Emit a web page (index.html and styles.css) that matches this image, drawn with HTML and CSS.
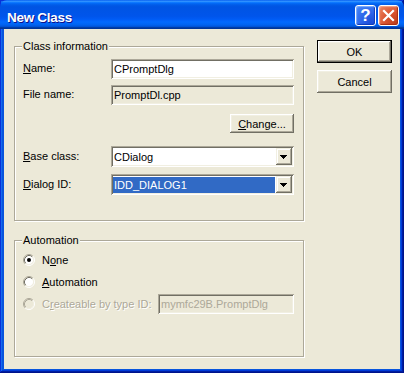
FILE: index.html
```html
<!DOCTYPE html>
<html>
<head>
<meta charset="utf-8">
<title>New Class</title>
<link rel="stylesheet" href="styles.css">
</head>
<body>
<div class="window">
  <div class="titlebar">
    <span class="title">New Class</span>
    <div class="tb-buttons">
      <span class="tb-btn help">?</span>
      <span class="tb-btn close">
        <svg width="19" height="19" viewBox="0 0 19 19"><path d="M5 5 L14 14 M14 5 L5 14" stroke="#fff" stroke-width="2.2" stroke-linecap="square"/></svg>
      </span>
    </div>
  </div>
  <div class="client">
    <div class="left">
      <div class="group g1">
        <div class="legend">Class information</div>
        <div class="row r-name">
          <span class="lbl"><u>N</u>ame:</span>
          <div class="edit">CPromptDlg</div>
        </div>
        <div class="row r-file">
          <span class="lbl">File name:</span>
          <div class="edit ro">PromptDl.cpp</div>
        </div>
        <div class="row r-change">
          <span class="btn change"><u>C</u>hange...</span>
        </div>
        <div class="row r-base">
          <span class="lbl"><u>B</u>ase class:</span>
          <div class="combo">
            <span class="combo-text">CDialog</span>
            <span class="drop"><svg width="16" height="17" viewBox="0 0 16 17"><path d="M4 7h7v1H4z M5 8h5v1H5z M6 9h3v1H6z M7 10h1v1H7z" fill="#000"/></svg></span>
          </div>
        </div>
        <div class="row r-dlg">
          <span class="lbl"><u>D</u>ialog ID:</span>
          <div class="combo">
            <span class="combo-text sel">IDD_DIALOG1</span>
            <span class="drop"><svg width="16" height="17" viewBox="0 0 16 17"><path d="M4 7h7v1H4z M5 8h5v1H5z M6 9h3v1H6z M7 10h1v1H7z" fill="#000"/></svg></span>
          </div>
        </div>
      </div>
      <div class="group g2">
        <div class="legend">Automation</div>
        <div class="row r-none">
          <svg class="radio" width="12" height="12" viewBox="0 0 12 12">
            <circle cx="6" cy="6" r="4.5" fill="#fff"/>
            <path d="M2.11 9.89 A5.5 5.5 0 0 1 9.89 2.11" fill="none" stroke="#ACA899"/>
            <path d="M9.89 2.11 A5.5 5.5 0 0 1 2.11 9.89" fill="none" stroke="#fff"/>
            <path d="M2.82 9.18 A4.5 4.5 0 0 1 9.18 2.82" fill="none" stroke="#716F64"/>
            <path d="M9.18 2.82 A4.5 4.5 0 0 1 2.82 9.18" fill="none" stroke="#F1EFE2"/>
            <circle cx="6" cy="6" r="2" fill="#000"/>
          </svg>
          <span class="rlabel">N<u>o</u>ne</span>
        </div>
        <div class="row r-auto">
          <svg class="radio" width="12" height="12" viewBox="0 0 12 12">
            <circle cx="6" cy="6" r="4.5" fill="#fff"/>
            <path d="M2.11 9.89 A5.5 5.5 0 0 1 9.89 2.11" fill="none" stroke="#ACA899"/>
            <path d="M9.89 2.11 A5.5 5.5 0 0 1 2.11 9.89" fill="none" stroke="#fff"/>
            <path d="M2.82 9.18 A4.5 4.5 0 0 1 9.18 2.82" fill="none" stroke="#716F64"/>
            <path d="M9.18 2.82 A4.5 4.5 0 0 1 2.82 9.18" fill="none" stroke="#F1EFE2"/>
          </svg>
          <span class="rlabel"><u>A</u>utomation</span>
        </div>
        <div class="row r-create">
          <svg class="radio" width="12" height="12" viewBox="0 0 12 12">
            <circle cx="6" cy="6" r="4.5" fill="#ECE9D8"/>
            <path d="M2.11 9.89 A5.5 5.5 0 0 1 9.89 2.11" fill="none" stroke="#ACA899"/>
            <path d="M9.89 2.11 A5.5 5.5 0 0 1 2.11 9.89" fill="none" stroke="#fff"/>
            <path d="M2.82 9.18 A4.5 4.5 0 0 1 9.18 2.82" fill="none" stroke="#ACA899"/>
            <path d="M9.18 2.82 A4.5 4.5 0 0 1 2.82 9.18" fill="none" stroke="#F1EFE2"/>
          </svg>
          <span class="rlabel disabled">C<u>r</u>eateable by type ID:</span>
          <div class="edit ro dis">mymfc29B.PromptDlg</div>
        </div>
      </div>
    </div>
    <div class="buttons">
      <span class="btn default">OK</span>
      <span class="btn">Cancel</span>
    </div>
  </div>
</div>
</body>
</html>
```

FILE: styles.css
```css
* { box-sizing: border-box; }
html, body { margin: 0; padding: 0; }
body {
  width: 404px;
  height: 373px;
  overflow: hidden;
  background: #0054E3;
  font-family: "Liberation Sans", Arial, sans-serif;
  font-size: 11px;
  color: #000;
}
.window {
  width: 404px;
  height: 373px;
  display: flex;
  flex-direction: column;
  padding: 0 4px 4px 4px;
  background: #0855DD;
  box-shadow: inset -1px -1px #00138C, inset 1px 1px #0831D9,
              inset -2px -2px #001EA0, inset 2px 2px #166AEE,
              inset -3px -3px #003BDA, inset 3px 3px #0855DD;
}
.titlebar {
  height: 29px;
  flex: none;
  margin: 0 -4px;
  padding: 2px 5px 0 7px;
  display: flex;
  align-items: center;
  justify-content: space-between;
  border-radius: 7px 7px 0 0;
  background: linear-gradient(180deg, #0058EE 0%, #3593FF 4%, #288EFF 6%, #127DFF 8%, #036FFC 10%, #0262EE 14%, #0057E5 20%, #0054E3 24%, #0055EB 56%, #005BF5 66%, #026AFE 76%, #0062EF 86%, #0052D6 92%, #0040AB 94%, #003092 100%);
}
.title {
  color: #fff;
  font-weight: bold;
  font-size: 13.5px;
  letter-spacing: -0.3px;
  margin-top: 3px;
  text-shadow: 1px 1px #0F1089;
}
.tb-buttons {
  display: flex;
  gap: 2px;
}
.tb-btn {
  width: 21px;
  height: 21px;
  border: 1px solid #fff;
  border-radius: 3px;
  display: flex;
  align-items: center;
  justify-content: center;
  color: #fff;
}
.help {
  background: radial-gradient(circle at 80% 85%, #1C4DD8 0%, #2B63E8 40%, #4A8AF8 100%);
  box-shadow: inset -1px -1px 1px #0F3BB8, inset 1px 1px 1px #7EB0FF;
  font-weight: bold;
  font-size: 17px;
  line-height: 19px;
}
.close {
  background: radial-gradient(circle at 85% 85%, #C0401E 0%, #DA5430 45%, #EE8A66 100%);
  box-shadow: inset -1px -1px 1px #A72E12, inset 1px 1px 1px #F3A58A;
}
.client {
  flex: 1;
  background: #ECE9D8;
  display: flex;
  padding-left: 10px;
}
.left {
  width: 290px;
  display: flex;
  flex-direction: column;
}
.group {
  border: 1px solid #ACA899;
  box-shadow: inset 1px 1px #fff, 1px 1px #fff;
  display: flex;
  flex-direction: column;
}
.g1 { margin-top: 17px; height: 175px; }
.g2 { margin-top: 19px; height: 117px; }
.legend {
  align-self: flex-start;
  margin: -7px 0 0 7px;
  padding: 0 1px;
  line-height: 13px;
  height: 13px;
  background: #ECE9D8;
}
.row {
  display: flex;
  align-items: center;
  padding: 0 9px 0 8px;
}
.lbl {
  width: 88px;
  flex: none;
  margin-top: -2px;
}
.r-name { margin-top: 6px; height: 20px; }
.r-file { margin-top: 6px; height: 20px; }
.r-change { margin-top: 9px; height: 19px; justify-content: flex-end; }
.r-base { margin-top: 13px; height: 21px; }
.r-dlg { margin-top: 7px; height: 21px; }
.r-none { margin-top: 5px; height: 16px; }
.r-auto { margin-top: 6px; height: 16px; }
.r-create { margin-top: 4px; height: 20px; }

.edit {
  flex: 1;
  height: 20px;
  background: #fff;
  padding: 0 3px;
  line-height: 20px;
  white-space: nowrap;
  box-shadow: inset 1px 1px #ACA899, inset -1px -1px #fff,
              inset 2px 2px #716F64, inset -2px -2px #F1EFE2;
}
.edit.ro { background: #ECE9D8; }
.edit.dis {
  flex: none;
  width: 136px;
  margin-left: auto;
  color: #ACA899;
}
.btn {
  display: flex;
  align-items: center;
  justify-content: center;
  background: #ECE9D8;
  box-shadow: inset -1px -1px #716F64, inset 1px 1px #fff,
              inset -2px -2px #ACA899, inset 2px 2px #F1EFE2;
}
.change {
  width: 64px;
  height: 19px;
  padding-top: 1px;
}
.combo {
  flex: 1;
  height: 21px;
  display: flex;
  padding: 2px;
  background: #fff;
  box-shadow: inset 1px 1px #ACA899, inset -1px -1px #fff,
              inset 2px 2px #716F64, inset -2px -2px #F1EFE2;
}
.combo-text {
  flex: 1;
  margin: 1px 1px 0 0;
  padding-left: 1px;
  line-height: 16px;
  height: 16px;
  white-space: nowrap;
}
.combo-text.sel {
  background: #316AC5;
  color: #fff;
}
.drop {
  width: 16px;
  height: 17px;
  flex: none;
  display: block;
  background: #ECE9D8;
  box-shadow: inset -1px -1px #716F64, inset 1px 1px #F1EFE2,
              inset -2px -2px #ACA899, inset 2px 2px #fff;
}
.drop svg { display: block; }
.radio {
  flex: none;
  margin-right: 7px;
  display: block;
}
.rlabel { margin-top: -1px; }
.rlabel.disabled {
  color: #ACA899;
  text-shadow: 1px 1px #fff;
}
.buttons {
  margin: 11px 0 0 13px;
  display: flex;
  flex-direction: column;
  gap: 7px;
}
.buttons .btn {
  width: 75px;
  height: 23px;
}
.btn.default {
  border: 1px solid #000;
}
```
